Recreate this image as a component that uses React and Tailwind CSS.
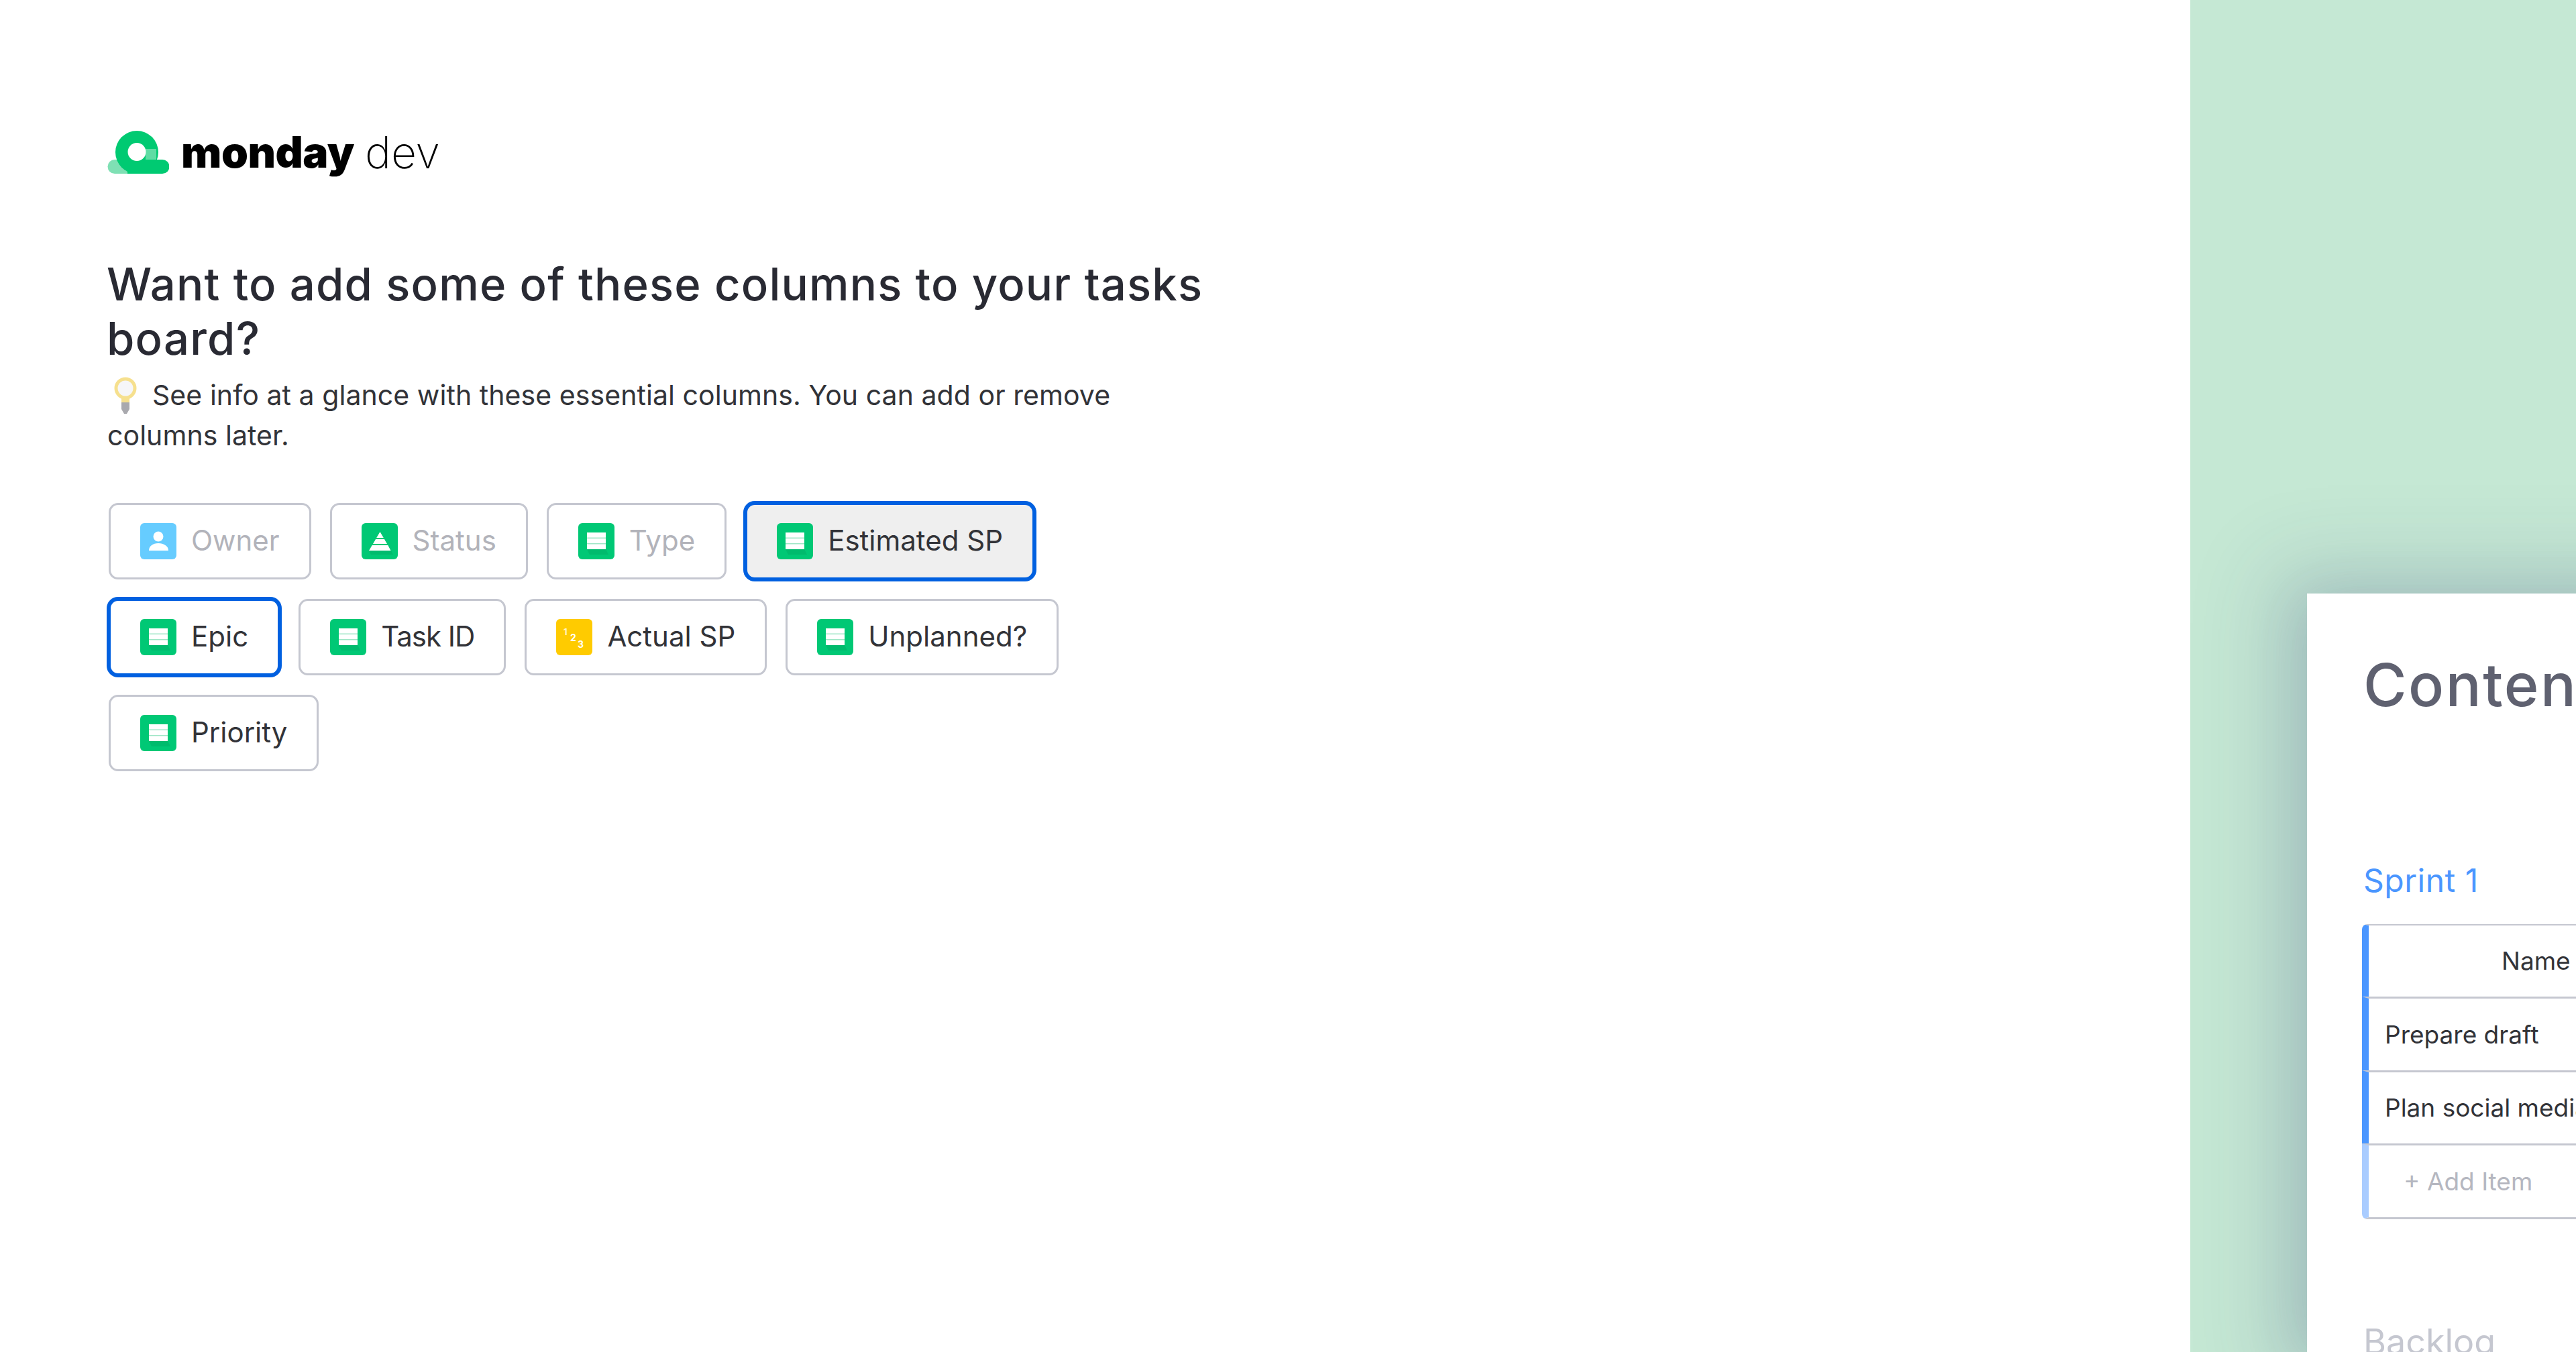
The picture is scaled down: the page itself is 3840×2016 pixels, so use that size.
import React from 'react'

const sans = 'font-["Inter","Noto_Sans",sans-serif]'

function TableIcon() {
  return (
    <svg viewBox="0 0 54 54" className="w-full h-full">
      <path d="M13 39h28l4 8H17z" fill="#00a35e" opacity="0.35" />
      <rect x="13" y="14" width="28" height="25" fill="#9fe6c6" />
      <rect x="13" y="14" width="28" height="7.5" fill="#fff" />
      <rect x="13" y="23" width="28" height="7" fill="#fff" />
      <rect x="13" y="31.5" width="28" height="7.5" fill="#fff" />
    </svg>
  )
}

function PersonIcon() {
  return (
    <svg viewBox="0 0 54 54" className="w-full h-full">
      <circle cx="27" cy="20" r="7.5" fill="#fff" />
      <path d="M13 41c0-7 6-11 14-11s15 4 15 11z" fill="#fff" />
    </svg>
  )
}

function StatusIcon() {
  return (
    <svg viewBox="0 0 54 54" className="w-full h-full">
      <path d="M11 41h33l3 6H14z" fill="#00a35e" opacity="0.35" />
      <path d="M27.5 13l5.300 9h-10.600z" fill="#fff" />
      <path d="M21 24h13l4 7H17z" fill="#fff" />
      <path d="M15.700 33h23.600l4.200 8H11z" fill="#fff" />
    </svg>
  )
}

function NumbersIcon() {
  return (
    <svg viewBox="0 0 54 54" className="w-full h-full" fill="#fff" fontFamily="Inter, sans-serif" fontWeight="700">
      <text x="11" y="24" fontSize="13" opacity="0.8">1</text>
      <text x="21" y="33" fontSize="14">2</text>
      <text x="32" y="43" fontSize="14">3</text>
    </svg>
  )
}

const columns = [
  { label: 'Owner', color: 'bg-[#66ccff]', icon: <PersonIcon />, disabled: true },
  { label: 'Status', color: 'bg-[#00c875]', icon: <StatusIcon />, disabled: true },
  { label: 'Type', color: 'bg-[#00c875]', icon: <TableIcon />, disabled: true },
  { label: 'Estimated SP', color: 'bg-[#00c875]', icon: <TableIcon />, selected: true, hover: true },
  { label: 'Epic', color: 'bg-[#00c875]', icon: <TableIcon />, selected: true },
  { label: 'Task ID', color: 'bg-[#00c875]', icon: <TableIcon />, tight: true },
  { label: 'Actual SP', color: 'bg-[#ffcb00]', icon: <NumbersIcon /> },
  { label: 'Unplanned?', color: 'bg-[#00c875]', icon: <TableIcon /> },
  { label: 'Priority', color: 'bg-[#00c875]', icon: <TableIcon /> },
]

function ColumnChip({ column }) {
  return (
    <div
      className={`h-[114px] flex items-center gap-[22px] px-[44px] rounded-[14px] border-[3px] text-[42px] ${
        column.selected
          ? 'border-[#0060e0] shadow-[0_0_0_3px_#0060e0]'
          : 'border-[#c5c7d0]'
      } ${column.hover ? 'bg-[#efefef]' : 'bg-white'} ${
        column.disabled ? 'text-[#b2b3ba]' : 'text-[#323338]'
      } ${column.tight ? 'tracking-[-1px]' : ''}`}
    >
      <span className={`w-[54px] h-[54px] rounded-[6px] shrink-0 ${column.color}`}>{column.icon}</span>
      <span className="-mt-[3px]">{column.label}</span>
    </div>
  )
}

function Logo() {
  return (
    <div className="flex items-center h-[64px]">
      <svg viewBox="0 0 92 64" className="w-[92px] h-[64px] shrink-0">
        <path d="M11 43h29v21H11a10.500 10.500 0 0 1 0-21z" fill="#7fe0b4" />
        <circle cx="44" cy="32" r="32" fill="#00ca72" />
        <path d="M30 43h52a10.500 10.500 0 0 1 0 21H30z" fill="#00ca72" />
        <rect x="57" y="27" width="16" height="16" fill="#5fdca4" />
        <circle cx="44" cy="31.500" r="13.500" fill="#fff" />
      </svg>
      <span className="ml-[18px] text-[64px] leading-none font-black tracking-[-0.5px] text-black">
        monday
      </span>
      <span className="ml-[16px] text-[66px] leading-none font-extralight text-black">
        dev
      </span>
    </div>
  )
}

export default function App() {
  return (
    <div className={`w-[3840px] h-[2016px] flex overflow-hidden bg-white ${sans}`}>
      {/* Left form */}
      <div className="flex-1 pl-[160px] pt-[195px]">
        <Logo />
        <h1 className="mt-[124px] -ml-[1px] w-[1700px] text-[67px] leading-[81px] font-medium tracking-[1.2px] text-[#292a33]">
          Want to add some of these columns to your tasks board?
        </h1>
        <p className="mt-[14px] w-[1600px] text-[41px] leading-[60px] tracking-[0.06px] text-[#323338]">
          <svg viewBox="0 0 34 56" className="inline-block w-[34px] h-[56px] mr-[23px] ml-[10px] align-[-14px]">
            <circle cx="17" cy="17" r="14" fill="#f6f6f8" stroke="#f6e08e" strokeWidth="5" />
            <path d="M11 30h12v8H11z" fill="#f6e08e" />
            <path d="M11 38h12v10l-4 7h-4l-4-7z" fill="#a9a9ae" />
          </svg>
          See info at a glance with these essential columns. You can add or remove columns later.
        </p>
        <div className="mt-[71px] ml-[2px] w-[1600px] flex flex-wrap gap-x-[28px] gap-y-[29px]">
          {columns.map((column) => (
            <ColumnChip key={column.label} column={column} />
          ))}
        </div>
      </div>

      {/* Board preview */}
      <div className="w-[575px] shrink-0 bg-[#c5e8d4] pl-[174px] pt-[885px] overflow-hidden">
        <div className="h-[1131px] w-[500px] bg-white pl-[84px] pt-[76px] shadow-[-6px_6px_120px_50px_rgba(50,60,120,0.14),-6px_6px_80px_rgba(50,60,120,0.16)]">
          <div className="text-[88px] leading-[120px] font-medium tracking-[2.5px] text-[#5f6170] whitespace-nowrap">
            Content
          </div>
          <div className="mt-[200px] text-[48px] leading-[64px] tracking-[0.5px] text-[#4a96ff] whitespace-nowrap">
            Sprint 1
          </div>
          <div className="mt-[33px] w-[416px] text-[37px] text-[#323338] whitespace-nowrap">
            <div className="h-[108px] ml-[-2px] border-l-[10px] border-l-[#4a96ff] border-t-[2px] border-t-[#c5c7d0] rounded-tl-[8px] flex items-center pl-[198px]">
              Name
            </div>
            <div className="h-[110px] ml-[-2px] border-l-[10px] border-l-[#4a96ff] border-t-[3px] border-t-[#c5c7d0] flex items-center pl-[24px]">
              Prepare draft
            </div>
            <div className="h-[109px] ml-[-2px] border-l-[10px] border-l-[#4a96ff] border-t-[3px] border-t-[#c5c7d0] flex items-center pl-[24px]">
              Plan social media
            </div>
            <div className="h-[113px] ml-[-2px] border-l-[10px] border-l-[#a9ccff] border-y-[3px] border-y-[#c5c7d0] rounded-bl-[8px] flex items-center pl-[52px] text-[#b5b7c0]">
              + Add Item
            </div>
          </div>
          <div className="mt-[151px] text-[52px] leading-[64px] text-[#c5c7d0] whitespace-nowrap">
            Backlog
          </div>
        </div>
      </div>
    </div>
  )
}
